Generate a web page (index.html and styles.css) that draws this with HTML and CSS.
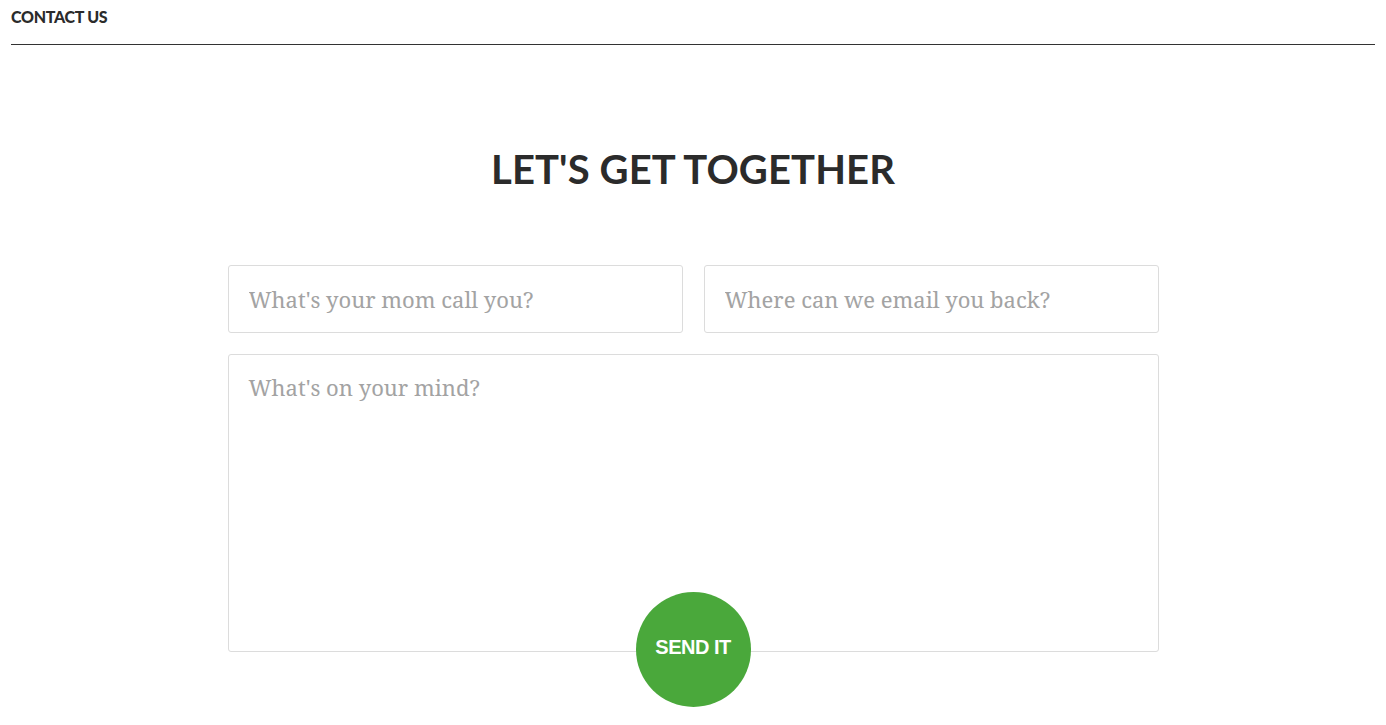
FILE: index.html
```html
<!DOCTYPE html>
<html>
<head>
<meta charset="utf-8">
<link rel="stylesheet" href="styles.css">
</head>
<body>
<header class="topbar">
  <h2 class="topbar-title">CONTACT US</h2>
</header>
<main class="contact">
  <h1 class="contact-title">LET'S GET TOGETHER</h1>
  <form class="contact-form">
    <div class="row">
      <input class="field" type="text" placeholder="What's your mom call you?">
      <input class="field" type="email" placeholder="Where can we email you back?">
    </div>
    <textarea class="field message" placeholder="What's on your mind?"></textarea>
    <div class="actions">
      <button class="send" type="button">SEND IT</button>
    </div>
  </form>
</main>
</body>
</html>
```
FILE: styles.css
```css
html, body {
  margin: 0;
  padding: 0;
  background: #fff;
}
body {
  font-family: "Lato", "Liberation Sans", sans-serif;
  color: #2b2b2b;
}
.topbar {
  margin: 0 11px;
  border-bottom: 1px solid #333;
  height: 45px;
  box-sizing: border-box;
}
.topbar-title {
  margin: 0;
  padding-top: 8px;
  font-size: 16px;
  font-weight: 900;
  letter-spacing: -0.3px;
  line-height: 18px;
}
.contact {
  display: flex;
  flex-direction: column;
  align-items: center;
}
.contact-title {
  margin: 100px 0 0;
  font-size: 40px;
  line-height: 48px;
  font-weight: 700;
  letter-spacing: 0.1px;
}
.contact-form {
  width: 931px;
  margin-top: 72px;
  display: flex;
  flex-direction: column;
  gap: 21px;
}
.row {
  display: flex;
  gap: 21px;
}
.field {
  box-sizing: border-box;
  border: 1px solid #dcdcdc;
  border-radius: 3px;
  background: #fff;
  font-family: "Noto Serif", "DejaVu Serif", serif;
  font-size: 22px;
  color: #555;
  outline: none;
  margin: 0;
}
.field::placeholder {
  color: #a3a3a3;
}
.row .field {
  flex: 1;
  width: 0;
  height: 68px;
  padding: 0 20px;
}
.message {
  display: block;
  height: 298px;
  padding: 17px 20px;
  resize: none;
}
.actions {
  display: flex;
  justify-content: center;
  margin-top: -81px;
}
.send {
  width: 115px;
  height: 115px;
  border-radius: 50%;
  border: none;
  background: #4aa83b;
  color: #fff;
  font-family: "Liberation Sans", Arial, sans-serif;
  font-weight: 700;
  font-size: 20px;
  letter-spacing: -0.5px;
  padding: 0 0 4px;
  cursor: pointer;
}
```
